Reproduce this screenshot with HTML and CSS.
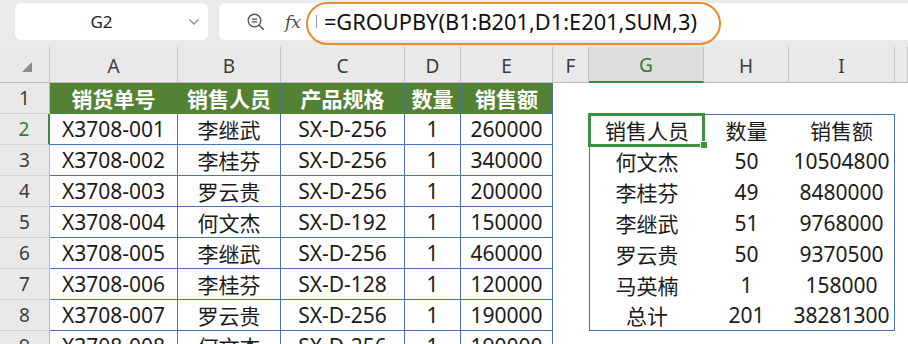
FILE: index.html
```html
<!DOCTYPE html>
<html>
<head>
<meta charset="utf-8">
<title>GROUPBY</title>
<link rel="stylesheet" href="styles.css">
</head>
<body>
<div class="toolbar">
	<div class="namebox">
		<span class="cellref">G2</span>
		<svg class="chevron" width="12" height="8" viewBox="0 0 12 8"><path d="M1.5 1.5 L6 6 L10.5 1.5" fill="none" stroke="#8a8a8a" stroke-width="1.3"/></svg>
	</div>
	<div class="formula_bar">
		<svg class="zoom_icon" width="20" height="20" viewBox="0 0 20 20">
			<circle cx="8.5" cy="8.5" r="6.3" fill="none" stroke="#555" stroke-width="1.4"/>
			<line x1="5.8" y1="7.2" x2="11.2" y2="7.2" stroke="#555" stroke-width="1.3"/>
			<line x1="5.8" y1="9.9" x2="11.2" y2="9.9" stroke="#555" stroke-width="1.3"/>
			<line x1="13.2" y1="13.2" x2="17.2" y2="17.2" stroke="#555" stroke-width="1.5" stroke-linecap="round"/>
		</svg>
		<span class="fx">fx</span>
		<span class="bar_sep"></span>
		<span class="formula">=GROUPBY(B1:B201,D1:E201,SUM,3)</span>
		<div class="mark"></div>
	</div>
</div>

<div class="sheet">
	<div class="corner"><span class="tri"></span></div>
	<div class="ch">A</div><div class="ch">B</div><div class="ch">C</div><div class="ch">D</div><div class="ch">E</div>
	<div class="ch">F</div><div class="ch ch_sel">G</div><div class="ch">H</div><div class="ch">I</div><div class="ch"></div>

	<div class="rh">1</div>
	<div class="c hd">销货单号</div><div class="c hd">销售人员</div><div class="c hd">产品规格</div><div class="c hd">数量</div><div class="c hd">销售额</div>
	<div class="c"></div><div class="c"></div><div class="c"></div><div class="c"></div><div class="c"></div>

	<div class="rh rh_sel">2</div>
	<div class="c d">X3708-001</div><div class="c d">李继武</div><div class="c d">SX-D-256</div><div class="c d">1</div><div class="c d">260000</div>
	<div class="c"></div><div class="c o ol ot sel">销售人员</div><div class="c o ot">数量</div><div class="c o or ot">销售额</div><div class="c"></div>

	<div class="rh">3</div>
	<div class="c d">X3708-002</div><div class="c d">李桂芬</div><div class="c d">SX-D-256</div><div class="c d">1</div><div class="c d">340000</div>
	<div class="c"></div><div class="c o ol">何文杰</div><div class="c o">50</div><div class="c o or">10504800</div><div class="c"></div>

	<div class="rh">4</div>
	<div class="c d">X3708-003</div><div class="c d">罗云贵</div><div class="c d">SX-D-256</div><div class="c d">1</div><div class="c d">200000</div>
	<div class="c"></div><div class="c o ol">李桂芬</div><div class="c o">49</div><div class="c o or">8480000</div><div class="c"></div>

	<div class="rh">5</div>
	<div class="c d">X3708-004</div><div class="c d">何文杰</div><div class="c d">SX-D-192</div><div class="c d">1</div><div class="c d">150000</div>
	<div class="c"></div><div class="c o ol">李继武</div><div class="c o">51</div><div class="c o or">9768000</div><div class="c"></div>

	<div class="rh">6</div>
	<div class="c d">X3708-005</div><div class="c d">李继武</div><div class="c d">SX-D-256</div><div class="c d">1</div><div class="c d">460000</div>
	<div class="c"></div><div class="c o ol">罗云贵</div><div class="c o">50</div><div class="c o or">9370500</div><div class="c"></div>

	<div class="rh">7</div>
	<div class="c d">X3708-006</div><div class="c d">李桂芬</div><div class="c d">SX-D-128</div><div class="c d">1</div><div class="c d">120000</div>
	<div class="c"></div><div class="c o ol">马英楠</div><div class="c o">1</div><div class="c o or">158000</div><div class="c"></div>

	<div class="rh">8</div>
	<div class="c d">X3708-007</div><div class="c d">罗云贵</div><div class="c d">SX-D-256</div><div class="c d">1</div><div class="c d">190000</div>
	<div class="c"></div><div class="c o ol ob">总计</div><div class="c o ob">201</div><div class="c o or ob">38281300</div><div class="c"></div>

	<div class="rh">9</div>
	<div class="c d">X3708-008</div><div class="c d">何文杰</div><div class="c d">SX-D-256</div><div class="c d">1</div><div class="c d">190000</div>
	<div class="c"></div><div class="c"></div><div class="c"></div><div class="c"></div><div class="c"></div>
</div>
</body>
</html>
```

FILE: styles.css
```css
html, body {
	margin: 0;
	height: 100%;
	overflow: hidden;
}
body {
	background: #ffffff;
	font-family: "Noto Sans", "Noto Sans CJK SC", sans-serif;
	color: #1b1b1b;
}

/* top bar: name box + formula bar */
.toolbar {
	display: flex;
	gap: 11px;
	height: 47px;
	padding: 3px 0 0 15px;
	box-sizing: border-box;
	background: #eaeaea;
}
.namebox {
	width: 193px;
	height: 37px;
	background: #fff;
	border-radius: 6px;
	display: flex;
	align-items: center;
	box-sizing: border-box;
	padding: 0 8px 0 0;
}
.cellref {
	flex: 1;
	text-align: center;
	font-size: 17px;
	color: #222;
}
.formula_bar {
	flex: 1;
	position: relative;
	height: 37px;
	background: #fff;
	border-radius: 6px 0 0 6px;
	display: flex;
	align-items: center;
}
.zoom_icon {
	margin-left: 27px;
}
.fx {
	margin-left: 19px;
	font-family: "DejaVu Serif", serif;
	font-style: italic;
	font-size: 17px;
	color: #4a4a4a;
}
.bar_sep {
	width: 1px;
	height: 13px;
	background: #9a9a9a;
	margin-left: 15px;
}
.formula {
	margin-left: 7px;
	font-size: 21.8px;
	color: #111;
	white-space: nowrap;
}
/* orange annotation ring round the formula */
.mark {
	position: absolute;
	left: 87px;
	top: -1px;
	width: 415px;
	height: 43px;
	box-sizing: border-box;
	border: 2px solid #e88d2f;
	border-radius: 22px;
}

/* the grid */
.sheet {
	display: grid;
	grid-template-columns: 50px 128px 103px 124px 56px 92px 36px 115px 85px 106px 13px;
	grid-template-rows: 36px repeat(9, 31px);
}
.sheet > div {
	box-sizing: border-box;
}
.corner {
	background: #e9e9e9;
	border-right: 1px solid #c4c4c4;
	border-bottom: 1px solid #b9b9b9;
	position: relative;
}
.tri {
	position: absolute;
	left: 22px;
	top: 15px;
	width: 0;
	height: 0;
	border-left: 10px solid transparent;
	border-bottom: 10px solid #8a8a8a;
}
.ch {
	background: #e9e9e9;
	border-right: 1px solid #c4c4c4;
	border-bottom: 1px solid #b9b9b9;
	display: flex;
	align-items: center;
	justify-content: center;
	font-size: 19px;
	color: #3d3d3d;
	padding-top: 2px;
}
.ch_sel {
	background: #dcdcdc;
	color: #2e7d32;
	border-bottom: 2px solid #3b8c3e;
}
.rh {
	background: #e9e9e9;
	border-right: 1px solid #b9b9b9;
	border-bottom: 1px solid #d2d2d2;
	display: flex;
	align-items: center;
	justify-content: center;
	font-size: 19px;
	color: #3d3d3d;
}
.rh_sel {
	color: #2e7d32;
	border-right: 2px solid #3b8c3e;
}
.c {
	display: flex;
	align-items: center;
	justify-content: center;
	font-size: 21px;
	white-space: nowrap;
	background: #fff;
}
.d {
	border-right: 1px solid #4a72b8;
	border-bottom: 1px solid #4a72b8;
}
.hd {
	background: #548235;
	color: #fff;
	font-weight: 700;
	border-right: 1px solid #4d7396;
	border-bottom: 1px solid #4a72b8;
}
.ol { border-left: 1px solid #4a72b8; }
.or { border-right: 1px solid #4a72b8; }
.ot { border-top: 1px solid #4a72b8; }
.ob { border-bottom: 1px solid #4a72b8; }
.sel {
	position: relative;
}
.sel::after {
	content: "";
	position: absolute;
	left: -2px;
	top: -2px;
	right: -1px;
	bottom: -2px;
	border: 3px solid #3f9142;
}
.sel::before {
	content: "";
	position: absolute;
	right: -4px;
	bottom: -4px;
	width: 6px;
	height: 6px;
	background: #3f9142;
	border: 1px solid #fff;
	z-index: 1;
}
```
